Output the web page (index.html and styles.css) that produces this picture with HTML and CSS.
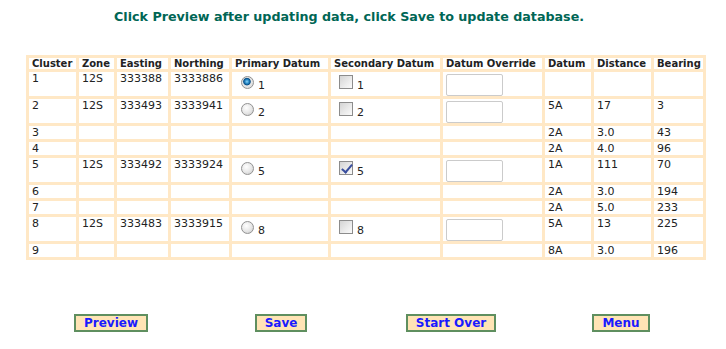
FILE: index.html
```html
<!DOCTYPE html>
<html>
<head>
<meta http-equiv="Content-Type" content="text/html; charset=utf-8">
<title>Cluster Datums</title>
<link rel="stylesheet" href="styles.css">
</head>
<body>
<div class="page">
	<h1 class="title">Click Preview after updating data, click Save to update database.</h1>

	<table class="grid">
		<colgroup>
			<col class="c-cluster"><col class="c-zone"><col class="c-east"><col class="c-north">
			<col class="c-prim"><col class="c-sec"><col class="c-ovr">
			<col class="c-datum"><col class="c-dist"><col class="c-bear">
		</colgroup>
		<tr>
			<th>Cluster</th><th>Zone</th><th>Easting</th><th>Northing</th>
			<th>Primary Datum</th><th>Secondary Datum</th><th>Datum Override</th>
			<th>Datum</th><th>Distance</th><th>Bearing</th>
		</tr>
		<tr class="edit">
			<td>1</td><td>12S</td><td>333388</td><td>3333886</td>
			<td><input type="radio" name="prim" class="radio" checked><span class="num">1</span></td>
			<td><input type="checkbox" class="check"><span class="num">1</span></td>
			<td><input type="text" class="ovr"></td>
			<td></td><td></td><td></td>
		</tr>
		<tr class="edit">
			<td>2</td><td>12S</td><td>333493</td><td>3333941</td>
			<td><input type="radio" name="prim" class="radio"><span class="num">2</span></td>
			<td><input type="checkbox" class="check"><span class="num">2</span></td>
			<td><input type="text" class="ovr"></td>
			<td>5A</td><td>17</td><td>3</td>
		</tr>
		<tr>
			<td>3</td><td></td><td></td><td></td><td></td><td></td><td></td>
			<td>2A</td><td>3.0</td><td>43</td>
		</tr>
		<tr>
			<td>4</td><td></td><td></td><td></td><td></td><td></td><td></td>
			<td>2A</td><td>4.0</td><td>96</td>
		</tr>
		<tr class="edit">
			<td>5</td><td>12S</td><td>333492</td><td>3333924</td>
			<td><input type="radio" name="prim" class="radio"><span class="num">5</span></td>
			<td><input type="checkbox" class="check" checked><span class="num">5</span></td>
			<td><input type="text" class="ovr"></td>
			<td>1A</td><td>111</td><td>70</td>
		</tr>
		<tr>
			<td>6</td><td></td><td></td><td></td><td></td><td></td><td></td>
			<td>2A</td><td>3.0</td><td>194</td>
		</tr>
		<tr>
			<td>7</td><td></td><td></td><td></td><td></td><td></td><td></td>
			<td>2A</td><td>5.0</td><td>233</td>
		</tr>
		<tr class="edit">
			<td>8</td><td>12S</td><td>333483</td><td>3333915</td>
			<td><input type="radio" name="prim" class="radio"><span class="num">8</span></td>
			<td><input type="checkbox" class="check"><span class="num">8</span></td>
			<td><input type="text" class="ovr"></td>
			<td>5A</td><td>13</td><td>225</td>
		</tr>
		<tr>
			<td>9</td><td></td><td></td><td></td><td></td><td></td><td></td>
			<td>8A</td><td>3.0</td><td>196</td>
		</tr>
	</table>

	<div class="actions">
		<div class="slot"><button type="button" class="btn">Preview</button></div>
		<div class="slot"><button type="button" class="btn">Save</button></div>
		<div class="slot"><button type="button" class="btn">Start Over</button></div>
		<div class="slot"><button type="button" class="btn">Menu</button></div>
	</div>
</div>
</body>
</html>
```

FILE: styles.css
```css
body{
	margin: 8px;
	background-color: #fff;
	font-family: "DejaVu Sans", Verdana, sans-serif;
}
.page{
	width: 680px;
	margin-left: 18px;
}
.title{
	margin: 0;
	padding: 1px 0 0 88px;
	font-size: 12.7px;
	line-height: 15px;
	font-weight: bold;
	color: #006655;
}
.grid{
	width: 680px;
	margin-top: 31px;
	table-layout: fixed;
	border-collapse: separate;
	border-spacing: 3px;
	background-color: #FFE8C6;
	font-size: 11px;
	color: #222;
}
.c-cluster{ width: 47px; }
.c-zone{ width: 35px; }
.c-east{ width: 51px; }
.c-north{ width: 58px; }
.c-prim{ width: 96px; }
.c-sec{ width: 109px; }
.c-ovr{ width: 99px; }
.c-datum{ width: 46px; }
.c-dist{ width: 57px; }
.c-bear{ width: 49px; }
.grid th{
	padding: 0 3px;
	background-color: #fff;
	text-align: left;
	font-size: 10px;
	line-height: 11px;
	font-weight: bold;
	white-space: nowrap;
}
.grid td{
	padding: 0 3px;
	background-color: #fff;
	line-height: 13px;
	vertical-align: top;
	white-space: nowrap;
}
.radio{
	-webkit-appearance: none;
	appearance: none;
	width: 13px;
	height: 13px;
	margin: 4px 4px 0 6px;
	border: 1px solid #929292;
	border-radius: 50%;
	background: radial-gradient(circle at 40% 35%, #fff 0, #e6e6e6 55%, #c4c4c4 100%);
	vertical-align: baseline;
}
.radio:checked{
	background: radial-gradient(circle at 45% 42%, #8fd6f7 0, #2a8bc8 22%, #0b4f86 38%, #e8e8e8 48%, #d2d2d2 100%);
}
.check{
	-webkit-appearance: none;
	appearance: none;
	position: relative;
	width: 14px;
	height: 14px;
	margin: 3px 4px 0 5px;
	border: 1px solid #8c8c8c;
	background: linear-gradient(135deg, #d4d4d4 0, #ececec 60%, #fafafa 100%);
	vertical-align: baseline;
}
.check:checked::after{
	content: "";
	position: absolute;
	left: 4px;
	top: 0;
	width: 4px;
	height: 9px;
	border: solid #3a4f9e;
	border-width: 0 2px 2px 0;
	transform: rotate(40deg);
}
.num{
	font-size: 11px;
}
.ovr{
	display: block;
	box-sizing: border-box;
	width: 57px;
	height: 22px;
	margin: 2px 0 0 0;
	border: 1px solid #cbcbcb;
	border-radius: 2px;
	background-color: #fff;
}
.actions{
	display: flex;
	margin-top: 52px;
}
.slot{
	width: 170px;
	text-align: center;
}
.btn{
	height: 18px;
	padding: 0 8px;
	border: 2px solid #5f8f5f;
	background-color: #FFE4B5;
	color: #1a1aff;
	font-family: "DejaVu Sans", Verdana, sans-serif;
	font-size: 12px;
	font-weight: bold;
	line-height: 14px;
}
```
